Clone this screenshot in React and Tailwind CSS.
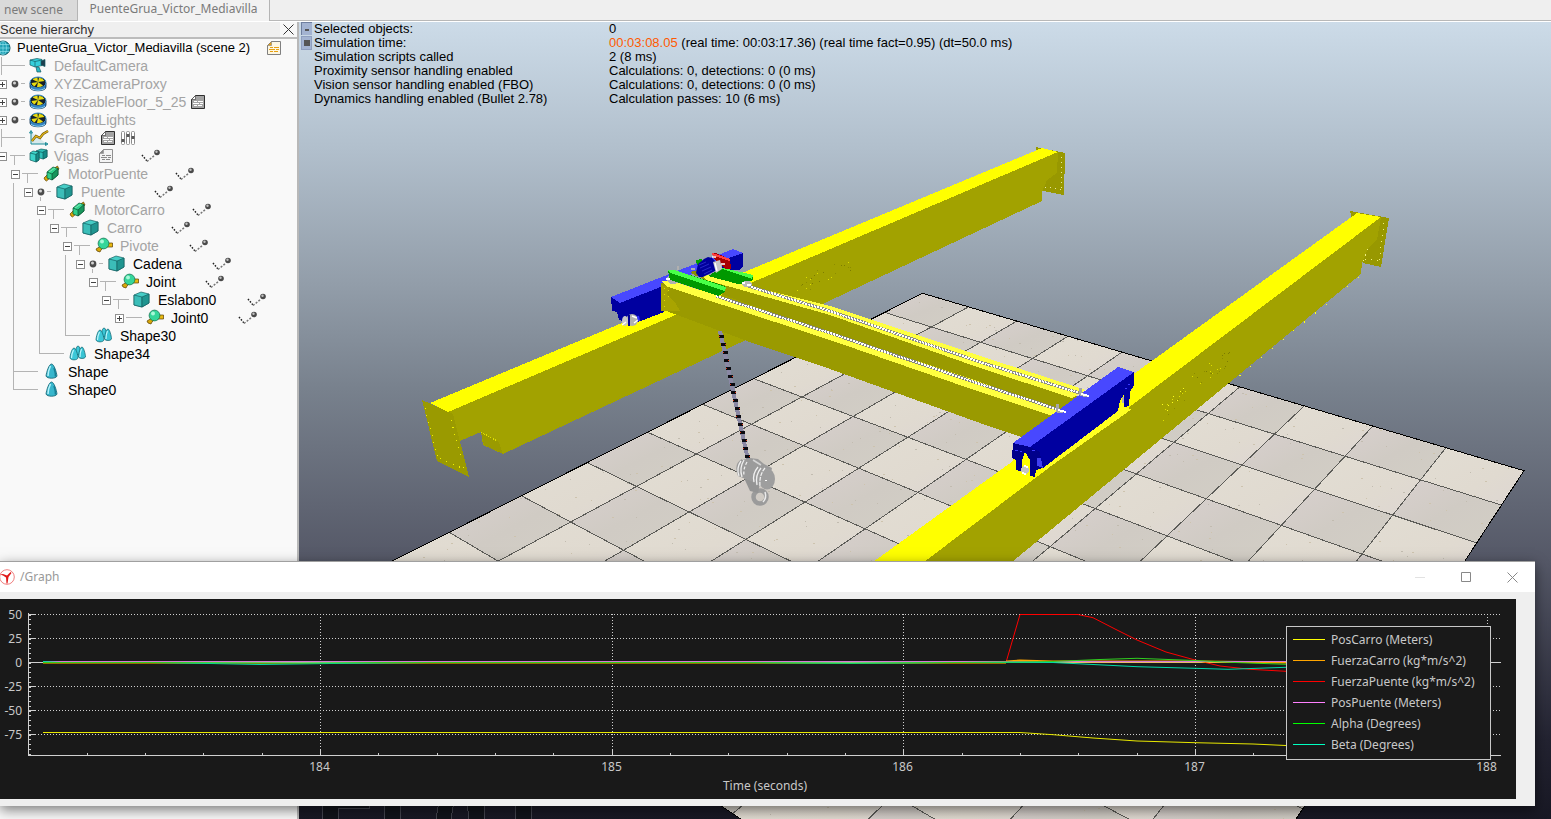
import React from "react";

/* ------------------------------------------------------------------ */
/* Deterministic noise, used for stone speckles and bolt holes         */
/* ------------------------------------------------------------------ */
function makeRandom(seed) {
  let s = seed;
  return () => {
    s = (s * 16807) % 2147483647;
    return s / 2147483647;
  };
}

/* Perspective projection of the 10 x 10 tile floor */
function project(u, v) {
  const w = 1 - 0.02556 * u - 0.03403 * v;
  return [
    (21.2 * u - 67.87 * v + 922.5) / w,
    (5.71 * u + 8.44 * v + 293.3) / w,
  ];
}
const pt = (u, v) => project(u, v).map((n) => n.toFixed(1)).join(",");

function Floor() {
  const tiles = [];
  const lines = [];
  const specks = [];
  const rnd = makeRandom(77);
  for (let u = 0; u < 10; u++) {
    for (let v = 0; v < 10; v++) {
      tiles.push(
        <polygon
          key={`${u}-${v}`}
          points={[pt(u, v), pt(u + 1, v), pt(u + 1, v + 1), pt(u, v + 1)].join(" ")}
          fill={(u + v) % 2 ? "url(#tileLight)" : "url(#tileDark)"}
        />
      );
      for (let k = 0; k < 7; k++) {
        const [x, y] = project(u + rnd(), v + rnd());
        specks.push(
          <rect
            key={`${u}-${v}-${k}`}
            x={Math.round(x)}
            y={Math.round(y)}
            width={k % 3 ? 1 : 2}
            height="1"
            fill={k % 2 ? "#c2bcb0" : "#cdc3ae"}
          />
        );
      }
    }
  }
  for (let i = 1; i < 10; i++) {
    lines.push(<path key={`u${i}`} d={`M${pt(i, 0)}L${pt(i, 10)}`} />);
    lines.push(<path key={`v${i}`} d={`M${pt(0, i)}L${pt(10, i)}`} />);
  }
  return (
    <g>
      {tiles}
      {specks}
      <g stroke="#5c5c58" strokeWidth="1" fill="none">{lines}</g>
      <polygon
        points={[pt(0, 0), pt(10, 0), pt(10, 10), pt(0, 10)].join(" ")}
        fill="none"
        stroke="#000"
        strokeWidth="1"
      />
    </g>
  );
}

function Bolts({ cx, cy, dx, dy, n, seed, colors = ["#dede00", "#7c7c00", "#8c8c00"] }) {
  const rnd = makeRandom(seed);
  return Array.from({ length: n }, (_, i) => {
    const a = rnd() * 2 - 1;
    const b = rnd() * 2 - 1;
    return (
      <rect
        key={i}
        x={Math.round(cx + a * dx)}
        y={Math.round(cy - a * dy + b * 9)}
        width="1"
        height="1"
        fill={colors[i % colors.length]}
      />
    );
  });
}

function HookBlock() {
  return (
    <g shapeRendering="auto">
      <circle cx="760" cy="497" r="6.500" fill="none" stroke="#9b9b9b" strokeWidth="4.500" />
      <path d="M763 502q4-4 2-10" stroke="#ececec" strokeWidth="1.500" fill="none" />
      <path d="M744 478l6 13 8 2 2-10z" fill="#949494" />
      <path d="M742 460l8-2 8 1 6 5 8 4-4 19-8-1-9-5-13-5q-5-12 4-17z" fill="#9b9b9b" />
      <ellipse cx="767" cy="479" rx="8" ry="10.500" fill="#9e9e9e" />
      <g stroke="#f0f0f0" strokeWidth="1.300" fill="none">
        <path d="M741 461q-5 7-2 15" />
        <path d="M744 460q-5 8-2 17" />
        <path d="M747 462q-4 7-3 14" strokeDasharray="3 2" />
        <path d="M758 467q-6 7-4 15" />
        <path d="M761 468q-6 7-4 17" />
        <path d="M765 468q-6 7-5 18" strokeDasharray="4 1" />
      </g>
      <path d="M753 460l8 5" stroke="#d4d4d4" strokeWidth="1.500" />
      <rect x="765" y="480" width="2" height="1" fill="#fff" />
    </g>
  );
}

function Crane() {
  const chain = Array.from({ length: 16 }, (_, i) => {
    const y = 335 + i * 8;
    const x = 720 + (y - 330) * 0.217;
    return (
      <g key={i}>
        <rect x={x - 2} y={y} width="5" height="3" fill="#0a0a10" />
        <rect x={x + (i % 2 ? 2 : -2)} y={y + 1} width="1" height="1" fill="#e03010" />
      </g>
    );
  });
  return (
    <g>
      {/* far runway beam */}
      <polygon points="1036,147 1065,153 1064,195 1043,191" fill="#989800" />
      <polygon
        points="448,412 1058,152 1057,173 1047,180 1042,192 1042,201 503,454 483,445 481,432 460,441"
        fill="#a2a200"
      />
      <polygon points="430,403 1042,148 1058,152 448,412" fill="#ffff00" />
      <polygon points="481,432 499,442 503,454 484,445" fill="#9a9a00" />
      <path d="M481 432L499 442" stroke="#dede00" strokeDasharray="1 1" />
      <polygon points="422,400 453,414 469,477 437,461" fill="#9a9a00" />
      <g stroke="#f0f000" strokeDasharray="1 6" fill="none">
        <path d="M425 408L438 458" />
        <path d="M451 420L465 472" />
        <path d="M440 458L466 470" />
      </g>
      <g stroke="#e6e6a0" strokeDasharray="1 4" fill="none">
        <path d="M1061 157V192" />
        <path d="M1045 187L1062 190" />
      </g>
      <Bolts cx={825} cy={275} dx={28} dy={12} n={26} seed={5} />

      {/* near runway beam */}
      <polygon points="1350,211 1389,218 1381,267 1363,263" fill="#989800" />
      <polygon
        points="1381,217 1377,240 1368,248 1362,263 1361,274 1012,562 924,562"
        fill="#a2a200"
      />
      <polygon points="1357,213 1381,217 924,562 873,562" fill="#ffff00" />
      <g stroke="#f0f080" strokeDasharray="1 5" fill="none">
        <path d="M1384 223L1379 263" />
        <path d="M1368 249L1363 262" />
        <path d="M1365 259L1379 261" />
      </g>
      <path d="M1359 277L1232 382" stroke="#ffff20" strokeDasharray="1 13" fill="none" />
      <Bolts cx={1212} cy={368} dx={20} dy={14} n={26} seed={9} />
      <Bolts cx={1174} cy={403} dx={12} dy={9} n={24} seed={31} colors={["#ffff20", "#e0e000", "#8c8c00"]} />

      {/* rear end carriage */}
      <polygon
        points="611,297 620,303 664,285 664,312 641,321 631,324 619,320 617,312 612,311"
        fill="#0000a0"
      />
      <polygon points="611,297 733,249 743,253 663,286 620,303" fill="#4848ff" />
      <polygon points="722,261 731,257 743,253 743,266 739,270 722,270" fill="#0000a0" />
      <polygon points="641,323 680,307 681,311 643,327" fill="#ffff00" />
      <g shapeRendering="auto">
        <ellipse cx="632" cy="320" rx="6" ry="6" fill="#b0b0b0" />
        <ellipse cx="625" cy="321" rx="3" ry="5" fill="#c8c8c8" />
        <path d="M629 315v11" stroke="#000098" strokeWidth="2" />
        <path d="M632 316l5 2M622 325l4-3M634 323l4-3" stroke="#fff" strokeWidth="1.500" />
        <path d="M638 316l1 5" stroke="#3030ff" strokeWidth="2" />
      </g>

      {/* rear girder */}
      <polygon points="700,276 830,313 980,364 1078,396 1064,412 980,385 830,333 715,292" fill="#9a9a00" />
      <polygon points="700,272 707,275 830,306 980,356 1086,390 1072,398 980,368 830,315 706,280" fill="#ffff40" />
      <path d="M748 286L830 311L980 362L1086 395" stroke="#8c8c84" strokeWidth="3" fill="none" />
      <path d="M748 286L830 311L980 362L1086 395" stroke="#fff" strokeWidth="2" strokeDasharray="2 1" fill="none" />

      {/* front girder */}
      <polygon points="661,283 674,284 830,338 980,390 1052,415 1024,438 980,423 830,369 747,341 680,316 661,309" fill="#9a9a00" />
      <polygon points="661,281 672,281 830,332 980,382 1062,410 1052,416 980,392 830,340 668,287" fill="#ffff40" />
      <polygon points="661,285 669,287 667,294 676,304 680,311 661,311" fill="#a8a400" />
      <path d="M716 296L830 333L980 384L1063 411" stroke="#84847c" strokeWidth="3" fill="none" />
      <path d="M716 296L830 333L980 384L1063 411" stroke="#fff" strokeWidth="2" strokeDasharray="2 1" fill="none" />
      <path d="M664 288v20M668 290v10" stroke="#dede00" strokeDasharray="1 5" />

      {/* trolley */}
      <polygon points="708,276 722,268 753,276 753,280 746,283 738,284" fill="#009800" />
      <polygon points="720,268 724,268 753,275 752,279" fill="#48ff48" />
      <ellipse cx="747" cy="284" rx="5" ry="3" fill="#b8b8b8" />
      <path d="M742 283h3M747 285h4" stroke="#fff" strokeWidth="2" />
      <polygon points="690,272 698,270 706,276 696,276" fill="#8c8c00" />
      <ellipse cx="673" cy="279" rx="6" ry="5" fill="#b0b0b0" />
      <path d="M666 279h5M672 275l4 3" stroke="#fff" strokeWidth="2" />
      <polygon points="668,270 674,270 725,286 725,292 718,296 670,280" fill="#009800" />
      <polygon points="668,270 674,270 726,287 725,291 670,273" fill="#48ff48" />
      <polygon points="696,260 702,259 702,264 697,265" fill="#00a000" />
      <polygon points="712,253 716,253 730,259 731,269 726,269 714,259" fill="#a80000" />
      <path d="M712 254L730 260" stroke="#ff4040" strokeWidth="2" />
      <g shapeRendering="auto">
        <path d="M698 264l6-5 4-2 4 1 5 5v7l-14 7h-4l-3-4z" fill="#00009c" />
        <path d="M699 265l7-3M700 268l9-4M702 271l9-4M704 274l8-4" stroke="#2828c8" />
        <path d="M713 262l7-2 2 9-6 4z" fill="#c8c8c8" />
        <path d="M715 263l2 8M721 264h4M712 257h4" stroke="#fff" strokeWidth="1.500" />
        <path d="M678 266v4M691 269h4" stroke="#b0b0b0" strokeWidth="2" />
      </g>

      {/* chain */}
      <path d="M720 331L748 460" stroke="#8a88a4" strokeWidth="4" />
      {chain}
      <HookBlock />

      {/* front end carriage */}
      <path d="M1013 459l4-9 14 20-2 5-14 0z" fill="#ffff00" />
      <path d="M1042 466L1118 411L1124 396L1126 408L1132 409L1044 471Z" fill="#ffff20" />
      <polygon
        points="1030,447 1134,372 1134,385 1130,392 1129,406 1124,407 1124,394 1120,401 1118,411 1043,468 1040,468"
        fill="#0000a0"
      />
      <polygon points="1013,443 1118,367 1134,372 1030,447" fill="#4848ff" />
      <polygon
        points="1013,443 1030,447 1040,452 1042,468 1036,470 1035,477 1030,476 1030,460 1025,452 1022,460 1022,472 1016,470 1016,460 1012,458"
        fill="#00008c"
      />
      <path d="M1037 458l4 0 2 10-6-2z" fill="#4040f0" />
      <circle cx="1025" cy="470" r="4" fill="#c4c4c4" />
      <path d="M1022 473l4 1M1024 466l4 1" stroke="#fff" strokeWidth="2" />
      <path d="M1123 397v6" stroke="#b0b0b0" strokeWidth="2" />
      <path d="M1015 450h3M1020 451h2M1032 450h3M1128 384h2M1125 388h2" stroke="#3c3cff" />
      <path d="M1057 404v7l6 1M1080 388v6l7 2" stroke="#a8a8a8" strokeWidth="3" fill="none" />
      <path d="M1058 410l8 2M1081 394l8 2" stroke="#fff" strokeWidth="2" />
    </g>
  );
}

function Scene3D() {
  return (
    <svg
      className="block h-full w-full"
      viewBox="299 22 1252 797"
      preserveAspectRatio="xMinYMin slice"
      shapeRendering="crispEdges"
      role="img"
      aria-label="3D view of the bridge crane"
    >
      <defs>
        <linearGradient id="sky" x1="0" y1="0" x2="0" y2="1">
          <stop offset="0" stopColor="#ccdbe8" />
          <stop offset="0.16" stopColor="#b1bfcc" />
          <stop offset="0.33" stopColor="#929da9" />
          <stop offset="0.46" stopColor="#78818d" />
          <stop offset="0.68" stopColor="#545766" />
          <stop offset="0.9" stopColor="#232331" />
          <stop offset="1" stopColor="#181824" />
        </linearGradient>
        <linearGradient id="tileLight" x1="0" y1="0" x2="1" y2="1">
          <stop offset="0" stopColor="#e2ddd3" />
          <stop offset="0.6" stopColor="#e0dad0" />
          <stop offset="1" stopColor="#ddd6d2" />
        </linearGradient>
        <linearGradient id="tileDark" x1="0" y1="0" x2="1" y2="1">
          <stop offset="0" stopColor="#d8d0ce" />
          <stop offset="0.5" stopColor="#d0cbc4" />
          <stop offset="1" stopColor="#d2cec5" />
        </linearGradient>
      </defs>
      <rect x="299" y="22" width="1252" height="797" fill="url(#sky)" />
      {/* watermark outlines under the floor */}
      <g fill="#11131a" stroke="#44454f" strokeWidth="1">
        <path d="M322.500 790V830H338.500V808.500H369.500V790Z" />
        <path d="M384.500 790H400.500V830H384.500Z" />
        <path d="M440.500 790L434.500 830H449.500L455.500 790Z" />
        <path d="M467.500 790L468.500 830H485.500L483.500 790Z" />
        <path d="M515.500 790H531.500V830H515.500Z" />
      </g>
      <Floor />
      <Crane />
    </svg>
  );
}

/* ------------------------------------------------------------------ */
/* Tree icons (20 x 18)                                                */
/* ------------------------------------------------------------------ */
const ICONS = {
  camera: (
    <g stroke="#145a62" strokeWidth="0.7">
      <path d="M1 3l7-1.500 5 1v6l-7 1.500-5-2z" fill="#35cfdc" />
      <path d="M1 3l5 1.500 7-1.500M6 4.500V10" fill="none" />
      <path d="M12 4l4-1.500v7l-4-1.500z" fill="#1e3e4e" />
      <path d="M7 10h3l2 5H8z" fill="#27b8c6" />
    </g>
  ),
  dummy: (
    <g>
      <path d="M1 8v4c0 5 16 5 16 0V8z" fill="#2f7ec0" stroke="#0d3150" strokeWidth="0.8" />
      <path d="M2 13c3 3 11 3 14 0" stroke="#8fd4f4" fill="none" />
      <ellipse cx="9" cy="7.500" rx="8" ry="5.500" fill="#16202a" stroke="#3d91c8" />
      <path d="M9 7L3.500 4.500Q5 3 8.500 2.800z" fill="#e8dc10" />
      <path d="M9 7l1-4.300Q14 3.200 15.500 6z" fill="#e8dc10" />
      <path d="M9 7l5 3.500Q11.500 12.500 8 12z" fill="#e8dc10" />
      <path d="M9 7l-3.500 4.500Q3 10.500 2.500 8z" fill="#e8dc10" />
    </g>
  ),
  graph: (
    <g fill="none">
      <path d="M2 3v12h16M2 1.500L.5 4h3zM19 15l-2.500-1.500v3z" stroke="#1d8c98" fill="#1d8c98" fillOpacity="0.15" />
      <path d="M3 12l4-5 4 2 3-4 5-3" stroke="#6b5200" strokeWidth="2.500" />
      <path d="M3 12l4-5 4 2 3-4 5-3" stroke="#e0b418" strokeWidth="1.300" />
    </g>
  ),
  compound: (
    <g stroke="#0f5c5c" strokeWidth="0.7">
      <path d="M7 4l5-2 6 1v7l-4 2-7-2z" fill="#2fc0b8" />
      <path d="M1 6l3-2 6 1v8l-3 2-6-2z" fill="#3cd4ca" />
      <path d="M1 6l6 1.500L10 5M7 7.500V15" fill="none" />
      <path d="M7 7.500L10 5v8l-3 2zM14 5l4-2v7l-4 2z" fill="#168a86" />
      <path d="M7 4l7 1.500" fill="none" />
    </g>
  ),
  prismatic: (
    <g strokeWidth="0.7">
      <path d="M1 13l4-4 2 4-3.500 3L2 15zM11 3.500L14.500 1l1.500 3-2.500 2z" fill="#d8a808" stroke="#5a3e00" />
      <path d="M4 7l6-5 5 1.500v6.500l-6 5-5-2z" fill="#2fd08a" stroke="#0a5030" />
      <path d="M9 9l6-5.500v6.500l-6 5z" fill="#18965c" stroke="#0a5030" />
      <path d="M4 7l5 2" fill="none" stroke="#0a5030" />
      <path d="M6 7l6-4" fill="none" stroke="#9af0c8" />
    </g>
  ),
  cuboid: (
    <g stroke="#145e60" strokeWidth="0.7">
      <path d="M1 4l7-3 8 2v9l-7 4-8-2z" fill="#46cdc6" />
      <path d="M1 4l8 2v10l-8-2z" fill="#3bbdb8" />
      <path d="M9 6l7-3v9l-7 4z" fill="#209590" />
    </g>
  ),
  revolute: (
    <g strokeWidth="0.7">
      <path d="M1 12l5-3 2 2-2 2-1 2-3-1z" fill="#d8a808" stroke="#5a3e00" />
      <path d="M11.500 6h6v4h-6z" fill="#e8b810" stroke="#5a3e00" />
      <circle cx="8.500" cy="6.500" r="5.400" fill="#35d69a" stroke="#0d6a48" />
      <circle cx="7" cy="4.500" r="2" fill="#a8f8d8" />
    </g>
  ),
  multi: (
    <g stroke="#10606c" strokeWidth="0.7">
      <path d="M9 1c-2 0-3 7-3 9h6c0-3-1-9-3-9z" fill="#3cc8d8" />
      <path d="M13 2c-2 0-3.500 7-3.500 10 1 2 6 2 7 0 0-3-2-10-3.500-10z" fill="#38c4d4" />
      <path d="M5 3c-2 0-4 7-4 10 1 2.500 7 2.500 8 0 0-3-2-10-4-10z" fill="#3cc8d8" />
      <path d="M4.500 5c-1 2-2 6-2 8M12.500 4c-1 2-1.500 6-1.500 8" stroke="#c0f6fc" strokeWidth="1.200" fill="none" />
    </g>
  ),
  shape: (
    <g>
      <path d="M8.500 1C6 1 3.500 9 3 13c1 3 10 3 11 0C13.500 9 11 1 8.500 1z" fill="#38b6cc" stroke="#12606e" strokeWidth="0.8" />
      <path d="M7.500 3c-1.500 3-2.500 7-2.500 10" stroke="#b4f2fa" strokeWidth="1.500" fill="none" />
      <path d="M11 5c1 3 1.500 6 1.500 8.500" stroke="#167e94" strokeWidth="1.500" fill="none" />
    </g>
  ),
};

function Icon({ name }) {
  return (
    <svg width="20" height="18" viewBox="0 0 20 18" className="shrink-0" aria-hidden="true">
      {ICONS[name]}
    </svg>
  );
}

function Globe() {
  return (
    <svg width="20" height="18" viewBox="0 0 20 18" className="-ml-2 shrink-0" aria-hidden="true">
      <circle cx="11" cy="9" r="7" fill="#1fa0b4" stroke="#0c5664" />
      <path d="M11 2v14M4 9h14M5 5.500h12M5 12.500h12" stroke="#9ceaf4" strokeWidth="0.6" />
      <ellipse cx="11" cy="9" rx="3.500" ry="7" fill="none" stroke="#9ceaf4" strokeWidth="0.6" />
    </svg>
  );
}

const SCRIPT_TONES = {
  orange: { page: "#fdf6e2", ink: "#e8a010", line: "#808080" },
  dark: { page: "#a4a4a4", ink: "#ffffff", line: "#303030" },
  light: { page: "#f4f4f4", ink: "#8a8a8a", line: "#909090" },
};

function ScriptIcon({ tone }) {
  const t = SCRIPT_TONES[tone];
  return (
    <svg width="14" height="14" viewBox="0 0 14 14" className="shrink-0" aria-hidden="true">
      <path d="M4.500.5h9v13H.5v-9z" fill={t.page} stroke={t.line} />
      <path d="M.5 4.500l4-4v4z" fill={t.ink} stroke={t.line} strokeWidth="0.600" />
      <path d="M3 6.500h3M7 6.500h5M2 8.500h6M9 8.500h3M3 10.500h3M7 10.500h4" stroke={t.ink} />
    </svg>
  );
}

function SlidersIcon() {
  return (
    <svg width="15" height="14" viewBox="0 0 15 14" className="ml-1.5 shrink-0" aria-hidden="true">
      {[0.5, 5.5, 10.5].map((x, i) => (
        <g key={x}>
          <rect x={x} y="0.5" width="3" height="13" rx="1" fill="#fff" stroke="#8c8c8c" />
          <rect x={x} y={[8, 3, 5][i]} width="3" height="3" fill="#5a5a5a" />
        </g>
      ))}
    </svg>
  );
}

function Vee({ spaced }) {
  return (
    <svg width="20" height="14" viewBox="0 0 20 14" className={spaced ? "ml-7 shrink-0" : "shrink-0"} aria-hidden="true">
      <path d="M1 6l5 6" stroke="#222" strokeWidth="1.500" strokeDasharray="1.500 1.500" />
      <path d="M6 12.500L14 6" stroke="#777" strokeWidth="1.500" strokeDasharray="2 1.500" />
      <circle cx="16" cy="3.500" r="2.800" fill="#4a4a4a" />
      <circle cx="15.500" cy="2.800" r="1.200" fill="#c0c0c0" />
    </svg>
  );
}

/* ------------------------------------------------------------------ */
/* Scene hierarchy                                                     */
/* ------------------------------------------------------------------ */
const ROWS = [
  { label: "DefaultCamera", icon: "camera", at: 54, dim: true, tee: 1, from: 1, to: 25 },
  { label: "XYZCameraProxy", icon: "dummy", at: 54, dim: true, box: "+", boxAt: -2, bullet: 15 },
  { label: "ResizableFloor_5_25", icon: "dummy", at: 54, dim: true, box: "+", boxAt: -2, bullet: 15, w: "w-[137px]", script: "dark" },
  { label: "DefaultLights", icon: "dummy", at: 54, dim: true, box: "+", boxAt: -2, bullet: 15 },
  { label: "Graph", icon: "graph", at: 54, dim: true, tee: 1, from: 1, to: 25, w: "w-[47px]", script: "dark", sliders: true },
  { label: "Vigas", icon: "compound", at: 54, dim: true, box: "-", boxAt: -2, from: 10, to: 25, drop: 14, w: "w-[45px]", script: "light", vee: true },
  { label: "MotorPuente", icon: "prismatic", at: 68, dim: true, box: "-", boxAt: 11, from: 22, to: 38, drop: 27, w: "w-[107px]", vee: true },
  { label: "Puente", icon: "cuboid", at: 81, dim: true, box: "-", boxAt: 24, bullet: 41, drop: 40, through: [13], w: "w-[73px]", vee: true },
  { label: "MotorCarro", icon: "prismatic", at: 94, dim: true, box: "-", boxAt: 37, from: 48, to: 64, drop: 53, through: [13], w: "w-[98px]", vee: true },
  { label: "Carro", icon: "cuboid", at: 107, dim: true, box: "-", boxAt: 50, from: 61, to: 77, drop: 66, through: [13, 39], w: "w-[64px]", vee: true },
  { label: "Pivote", icon: "revolute", at: 120, dim: true, box: "-", boxAt: 63, from: 74, to: 90, drop: 79, through: [13, 39], w: "w-[69px]", vee: true },
  { label: "Cadena", icon: "cuboid", at: 133, box: "-", boxAt: 76, bullet: 93, drop: 92, through: [13, 39, 65], w: "w-[79px]", vee: true },
  { label: "Joint", icon: "revolute", at: 146, box: "-", boxAt: 89, from: 100, to: 116, drop: 105, through: [13, 39, 65], w: "w-[59px]", vee: true },
  { label: "Eslabon0", icon: "cuboid", at: 158, box: "-", boxAt: 102, from: 113, to: 129, drop: 118, through: [13, 39, 65], w: "w-[89px]", vee: true },
  { label: "Joint0", icon: "revolute", at: 171, box: "+", boxAt: 115, from: 126, to: 142, through: [13, 39, 65], w: "w-[67px]", vee: true },
  { label: "Shape30", icon: "multi", at: 120, corner: 65, from: 65, to: 90, through: [13, 39] },
  { label: "Shape34", icon: "multi", at: 94, corner: 39, from: 39, to: 64, through: [13] },
  { label: "Shape", icon: "shape", at: 68, tee: 13, from: 13, to: 38 },
  { label: "Shape0", icon: "shape", at: 68, corner: 13, from: 13, to: 38 },
];

function Connectors({ row, start, end }) {
  if (end <= start) return null;
  return (
    <svg
      width={end - start}
      height="18"
      viewBox={`${start} 0 ${end - start} 18`}
      className="shrink-0"
      shapeRendering="crispEdges"
      aria-hidden="true"
    >
      <g stroke="#b4b4b4" strokeWidth="1" fill="none">
        {(row.through || []).map((x) => (
          <path key={x} d={`M${x + 0.5} 0V18`} />
        ))}
        {row.tee !== undefined && <path d={`M${row.tee + 0.5} 0V18`} />}
        {row.corner !== undefined && <path d={`M${row.corner + 0.5} 0V9`} />}
        {row.from !== undefined && <path d={`M${row.from} 8.500H${row.to}`} />}
        {row.drop !== undefined && <path d={`M${row.drop + 0.5} ${row.bullet ? 14 : 9}V18`} />}
        {row.bullet !== undefined && <path d={`M${row.bullet + 6} 8.500h4`} />}
      </g>
      {row.bullet !== undefined && (
        <g shapeRendering="auto">
          <circle cx={row.bullet} cy="9" r="3.4" fill="#4c4c4c" />
          <circle cx={row.bullet - 0.5} cy="8" r="1.500" fill="#d4d4d4" />
        </g>
      )}
    </svg>
  );
}

function TreeRow({ row }) {
  const end = row.at - 25;
  const hasBox = row.box !== undefined;
  return (
    <li role="treeitem" className="flex h-[18px] items-center">
      {hasBox ? (
        <>
          <Connectors row={row} start={0} end={row.boxAt} />
          <button
            type="button"
            aria-label={`Toggle ${row.label}`}
            className={
              "h-[9px] w-[9px] shrink-0 border border-[#909090] bg-white text-[#444] " +
              (row.boxAt < 0 ? "-ml-0.5" : "")
            }
          >
            <svg viewBox="0 0 7 7" className="block h-[7px] w-[7px]" shapeRendering="crispEdges">
              <path d={row.box === "+" ? "M1 3.500h5M3.500 1v5" : "M1 3.500h5"} stroke="currentColor" />
            </svg>
          </button>
          <Connectors row={row} start={row.boxAt + 9} end={end} />
        </>
      ) : (
        <Connectors row={row} start={0} end={end} />
      )}
      <Icon name={row.icon} />
      <span
        className={
          "ml-[5px] shrink-0 whitespace-nowrap text-[14px] leading-[18px] " +
          (row.dim ? "text-[#a4a4a4] " : "text-black ") +
          (row.w || "")
        }
      >
        {row.label}
      </span>
      {row.script && <ScriptIcon tone={row.script} />}
      {row.sliders && <SlidersIcon />}
      {row.vee && <Vee spaced={Boolean(row.script)} />}
    </li>
  );
}

function Sidebar() {
  return (
    <aside className="w-[299px] shrink-0 overflow-hidden border-r-2 border-[#b8b8b8] bg-[#f9f9f9] font-['Liberation_Sans',Arial,sans-serif]">
      <header className="flex h-[17px] items-center justify-between border-b-2 border-[#bcbcbc] bg-[#efefef]">
        <h2 className="whitespace-nowrap text-[13px] leading-[16px] text-[#333]">Scene hierarchy</h2>
        <button type="button" aria-label="Close hierarchy" className="flex h-[15px] w-[17px] items-center justify-center bg-[#f7f7f7]">
          <svg width="11" height="11" viewBox="0 0 11 11">
            <path d="M.5.500l10 10M10.500.500l-10 10" stroke="#333" strokeWidth="1" />
          </svg>
        </button>
      </header>
      <ul role="tree" aria-label="Scene hierarchy">
        <li role="treeitem" className="flex h-[18px] items-center">
          <Globe />
          <span className="ml-[5px] w-[250px] shrink-0 whitespace-nowrap text-[13px] leading-[18px] text-black">
            PuenteGrua_Victor_Mediavilla (scene 2)
          </span>
          <ScriptIcon tone="orange" />
        </li>
        {ROWS.map((row) => (
          <TreeRow key={row.label} row={row} />
        ))}
      </ul>
    </aside>
  );
}

/* ------------------------------------------------------------------ */
/* Simulation read-out                                                 */
/* ------------------------------------------------------------------ */
const STATS = [
  ["Selected objects:", "0"],
  ["Simulation time:", null],
  ["Simulation scripts called", "2 (8 ms)"],
  ["Proximity sensor handling enabled", "Calculations: 0, detections: 0 (0 ms)"],
  ["Vision sensor handling enabled (FBO)", "Calculations: 0, detections: 0 (0 ms)"],
  ["Dynamics handling enabled (Bullet 2.78)", "Calculation passes: 10 (6 ms)"],
];

function Readout() {
  return (
    <div className="absolute left-0.5 top-0 flex gap-0.5 font-['Liberation_Sans',Arial,sans-serif]">
      <div className="flex flex-col gap-px">
        <button type="button" aria-label="Minimise read-out" className="flex h-[13px] w-[11px] items-end justify-center border-l border-t border-[#6f7f9f] bg-[#a3b3d1] pb-1">
          <span className="block h-0.5 w-1 bg-[#555]" />
        </button>
        <button type="button" aria-label="Toggle read-out" className="flex h-[14px] w-[11px] items-center justify-center border border-[#8f9fbf] bg-[#a3b3d1]">
          <span className="block h-1.5 w-1.5 bg-[#555]" />
        </button>
      </div>
      <table className="border-collapse text-left text-[13px] leading-[14px] text-black">
        <tbody>
          {STATS.map(([name, value]) => (
            <tr key={name} className="h-[14px]">
              <th scope="row" className="w-[295px] whitespace-nowrap p-0 font-normal">{name}</th>
              <td className="whitespace-nowrap p-0">
                {value ?? (
                  <>
                    <span className="text-[#ff5a00]">00:03:08.05</span> (real time: 00:03:17.36) (real time fact=0.95) (dt=50.0 ms)
                  </>
                )}
              </td>
            </tr>
          ))}
        </tbody>
      </table>
    </div>
  );
}

/* ------------------------------------------------------------------ */
/* Graph window                                                        */
/* ------------------------------------------------------------------ */
const LEGEND = [
  ["PosCarro (Meters)", "bg-[#ffff00]"],
  ["FuerzaCarro (kg*m/s^2)", "bg-[#ffa500]"],
  ["FuerzaPuente (kg*m/s^2)", "bg-[#ff0000]"],
  ["PosPuente (Meters)", "bg-[#ff80ff]"],
  ["Alpha (Degrees)", "bg-[#00ff00]"],
  ["Beta (Degrees)", "bg-[#00ffc0]"],
];
const Y_TICKS = [50, 25, 0, -25, -50, -75];
const X_TICKS = [184, 185, 186, 187, 188];
const yPos = (value) => 662.5 - value * 0.96;
const xPos = (time) => 320.5 + Math.round((time - 184) * 291.7);

function Plot() {
  const minorY = Array.from({ length: 30 }, (_, i) => Math.round(yPos(50 - i * 5)) + 0.5);
  const minorX = Array.from({ length: 26 }, (_, i) => xPos(183 + i * 0.2)).filter((x) => x > 30 && x < 1500);
  return (
    <svg
      className="block h-[200px] w-full"
      viewBox="0 599 1516 200"
      preserveAspectRatio="xMinYMin slice"
      role="img"
      aria-label="Values over time"
    >
      <rect x="0" y="599" width="1516" height="200" fill="#191919" />
      <g stroke="#d0d0d0" strokeWidth="1" shapeRendering="crispEdges" fill="none">
        <path d="M28.500 613V755M28 755.500H1501M28 662.500H1501" />
        {Y_TICKS.map((v) => (
          <path key={v} d={`M29 ${yPos(v)}h6`} />
        ))}
        {minorY.map((y) => (
          <path key={y} d={`M29 ${y}h2`} />
        ))}
        {X_TICKS.map((t) => (
          <path key={t} d={`M${xPos(t)} 749v6`} />
        ))}
        {minorX.map((x) => (
          <path key={x} d={`M${x} 753v2`} />
        ))}
        <g strokeDasharray="1 2">
          {Y_TICKS.filter((v) => v !== 0).map((v) => (
            <path key={v} d={`M35 ${yPos(v)}H1500`} />
          ))}
          {X_TICKS.map((t) => (
            <path key={t} d={`M${xPos(t)} 614V749`} />
          ))}
        </g>
      </g>
      <g fill="none" strokeWidth="1">
        <path stroke="#e8e800" d="M43 732.500H1020L1053 734.700L1093 738L1137 741L1195 742.700L1253 744L1286 745.500" />
        <path stroke="#9a6a00" d="M43 663.500H1006" />
        <path stroke="#ff0000" d="M1006 662.500L1020 614.500H1078L1093 617.700L1115 629L1137 640L1166 652L1195 660L1220 666L1250 669.300L1286 671.300" />
        <path stroke="#ffa500" d="M1006 661.500L1020 660.500L1053 661.500H1195L1286 662.500" strokeWidth="2" />
        <path stroke="#d878d8" d="M43 661.500H1286" />
        <path stroke="#00d8a8" d="M43 661.500L60 662.500H150L210 663.500L260 664.500L330 663.500L430 662.500H750L850 663.500L950 662.500H1053L1137 666.700L1195 668.300L1228 669.300L1286 667.300" />
        <path stroke="#30d020" d="M43 662.500L160 662.500L300 663L380 662.500H700L850 663L960 662.500L1053 661.500L1100 659.500L1137 658.300L1195 660.500L1235 662.500L1286 664.300" />
      </g>
      <g fill="#c8c8c8" fontFamily="'Noto Sans', 'Open Sans', sans-serif" fontSize="12">
        {Y_TICKS.map((v) => (
          <text key={v} x="22" y={yPos(v) + 4.5} textAnchor="end">{v}</text>
        ))}
        {X_TICKS.map((t) => (
          <text key={t} x={xPos(t) - 1} y="771" textAnchor="middle">{t}</text>
        ))}
        <text x="765" y="790" textAnchor="middle">Time (seconds)</text>
      </g>
    </svg>
  );
}

function GraphWindow() {
  return (
    <section
      aria-label="Graph window"
      className="absolute left-0 right-4 top-[539px] border-t border-[#a0a0a0] bg-[#efefef] pb-[7px] font-['Noto_Sans','Open_Sans',sans-serif] shadow-[0_4px_12px_rgba(0,0,0,0.5)]"
    >
      <header className="flex h-[30px] items-center justify-between bg-white">
        <div className="flex items-center gap-1">
          <svg width="16" height="16" viewBox="0 0 16 16" aria-hidden="true">
            <circle cx="7" cy="8" r="7.300" fill="#fff" stroke="#f08080" />
            <path d="M0 5.500l3-.5 4 1.500 3.500-3.500 1 1L8.500 8l-1 6.500H6.500L6 8.500 3 6.500z" fill="#e01818" />
          </svg>
          <h2 className="text-[12px] leading-4 text-[#999]">/Graph</h2>
        </div>
        <div className="flex items-center">
          <button type="button" aria-label="Minimise" className="flex w-[46px] justify-center">
            <svg width="11" height="11" viewBox="0 0 11 11"><path d="M0 5.500h10" stroke="#e2e2e2" /></svg>
          </button>
          <button type="button" aria-label="Maximise" className="flex w-[46px] justify-center">
            <svg width="11" height="11" viewBox="0 0 11 11"><path d="M.5.500h9v9h-9z" fill="none" stroke="#888" /></svg>
          </button>
          <button type="button" aria-label="Close" className="flex w-[46px] justify-center">
            <svg width="11" height="11" viewBox="0 0 11 11"><path d="M.5.500l10 10M10.500.500l-10 10" stroke="#888" /></svg>
          </button>
        </div>
      </header>
      <div className="relative mr-[19px] mt-[7px]">
        <Plot />
        <ul className="absolute right-[25px] top-[27px] w-[205px] border border-[#c8c8c8] bg-[#191919] px-1.5 pb-1 pt-0.5 text-[12px] leading-[21px] text-[#c8c8c8]">
          {LEGEND.map(([name, color]) => (
            <li key={name} className="flex h-[21px] items-center gap-1.5 whitespace-nowrap">
              <span className={`h-px w-8 ${color}`} />
              {name}
            </li>
          ))}
        </ul>
      </div>
    </section>
  );
}

/* ------------------------------------------------------------------ */

export default function App() {
  return (
    <div className="flex h-screen min-h-[819px] flex-col overflow-hidden bg-[#efefef]">
      <nav className="flex h-[21px] shrink-0 items-stretch font-['Noto_Sans','Open_Sans',sans-serif] text-[12px] leading-4 text-[#7a7a7a]">
        <button type="button" className="w-[78px] border-b border-r border-[#b4b4b4] bg-[#dadada] pl-1 pb-px text-left">
          new scene
        </button>
        <button type="button" aria-current="page" className="w-[192px] border-r border-[#b4b4b4] bg-[#f2f2f2] pb-1 text-center">
          PuenteGrua_Victor_Mediavilla
        </button>
        <div className="flex-1 border-b border-[#b8b8b8]" />
      </nav>
      <main className="relative flex flex-1 border-t border-white">
        <Sidebar />
        <div className="relative min-w-0 flex-1 overflow-hidden">
          <Scene3D />
          <Readout />
        </div>
        <GraphWindow />
      </main>
    </div>
  );
}
